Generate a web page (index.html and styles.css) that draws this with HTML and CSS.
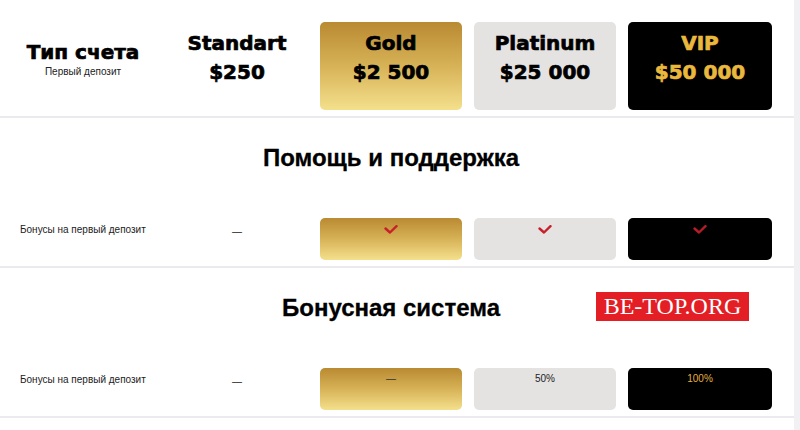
FILE: index.html
```html
<!DOCTYPE html>
<html lang="ru">
<head>
<meta charset="utf-8">
<link rel="stylesheet" href="styles.css">
</head>
<body>
<div class="page">
  <div class="grid head">
    <div class="type-cell">
      <div class="type-title">Тип счета</div>
      <div class="type-sub">Первый депозит</div>
    </div>
    <div class="plan">Standart<br>$250</div>
    <div class="plan card gold">Gold<br>$2 500</div>
    <div class="plan card plat">Platinum<br>$25 000</div>
    <div class="plan card vip">VIP<br>$50 000</div>
  </div>

  <section class="section">
    <h2 class="sec-title">Помощь и поддержка</h2>
    <div class="grid row">
      <div class="label">Бонусы на первый депозит</div>
      <div class="dash">—</div>
      <div class="card gold cell"><svg class="check" width="14" height="9" viewBox="0 0 14 9"><polyline points="1.5,3.5 6,7.5 12.5,1.2" fill="none" stroke="#c8202a" stroke-width="2.4" stroke-linecap="round" stroke-linejoin="round"/></svg></div>
      <div class="card plat cell"><svg class="check" width="14" height="9" viewBox="0 0 14 9"><polyline points="1.5,3.5 6,7.5 12.5,1.2" fill="none" stroke="#c8202a" stroke-width="2.4" stroke-linecap="round" stroke-linejoin="round"/></svg></div>
      <div class="card vip cell"><svg class="check" width="14" height="9" viewBox="0 0 14 9"><polyline points="1.5,3.5 6,7.5 12.5,1.2" fill="none" stroke="#b81c26" stroke-width="2.4" stroke-linecap="round" stroke-linejoin="round"/></svg></div>
    </div>
  </section>

  <section class="section">
    <h2 class="sec-title">Бонусная система</h2>
    <div class="grid row">
      <div class="label">Бонусы на первый депозит</div>
      <div class="dash">—</div>
      <div class="card gold cell"><span class="val dark">—</span></div>
      <div class="card plat cell"><span class="val">50%</span></div>
      <div class="card vip cell"><span class="val goldtxt">100%</span></div>
    </div>
  </section>

  <div class="badge">BE-TOP.ORG</div>
</div>
</body>
</html>
```

FILE: styles.css
```css
html, body {
  margin: 0;
  padding: 0;
}
body {
  background: #f1f1f3;
  font-family: "Liberation Sans", Arial, sans-serif;
  color: #000;
}
.page {
  position: relative;
  width: 794px;
  height: 430px;
  background: #fff;
}
.grid {
  display: grid;
  grid-template-columns: 142px 142px 142px 142px 144px;
  column-gap: 12px;
  padding-left: 12px;
}
.head {
  padding-top: 22px;
  padding-bottom: 6px;
  border-bottom: 2px solid #ebebef;
}
.type-cell {
  display: flex;
  flex-direction: column;
  align-items: center;
  padding-top: 18px;
}
.type-title {
  font-family: "DejaVu Sans", sans-serif;
  font-weight: 700;
  font-size: 20px;
  line-height: 24px;
  -webkit-text-stroke: 0.7px currentColor;
}
.type-sub {
  font-size: 10px;
  line-height: 12px;
  margin-top: 2px;
  color: #222;
}
.plan {
  height: 88px;
  box-sizing: border-box;
  padding-top: 7px;
  text-align: center;
  font-family: "DejaVu Sans", sans-serif;
  font-weight: 700;
  font-size: 20px;
  line-height: 29px;
  -webkit-text-stroke: 0.7px currentColor;
}
.card {
  border-radius: 5px;
}
.gold {
  background: linear-gradient(180deg, #b98a32 0%, #d7b257 50%, #f4e08c 100%);
}
.plat {
  background: #e4e3e2;
}
.vip {
  background: #000;
  color: #e9b83d;
}
.section {
  border-bottom: 2px solid #ebebef;
  padding-bottom: 6px;
}
.sec-title {
  margin: 0;
  padding-top: 28px;
  padding-right: 12px;
  height: 24px;
  line-height: 24px;
  text-align: center;
  font-size: 24px;
  font-weight: 700;
  margin-bottom: 48px;
  -webkit-text-stroke: 0.3px currentColor;
}
.row .card.cell {
  height: 42px;
  display: flex;
  justify-content: center;
  align-items: flex-start;
}
.check {
  margin-top: 7px;
}
.label {
  padding-left: 8px;
  padding-top: 6px;
  font-size: 10px;
  line-height: 12px;
  color: #222;
}
.dash {
  padding-top: 8px;
  text-align: center;
  font-size: 10px;
  line-height: 12px;
  color: #222;
}
.val {
  margin-top: 5px;
  font-size: 10px;
  line-height: 12px;
  color: #222;
}
.val.dark {
  color: #333;
}
.val.goldtxt {
  color: #e0b040;
}
.badge {
  position: absolute;
  left: 596px;
  top: 292px;
  width: 153px;
  height: 29px;
  background: #e31e25;
  color: #fff;
  font-family: "Liberation Serif", "Times New Roman", serif;
  font-size: 24px;
  line-height: 29px;
  text-align: center;
}
```
